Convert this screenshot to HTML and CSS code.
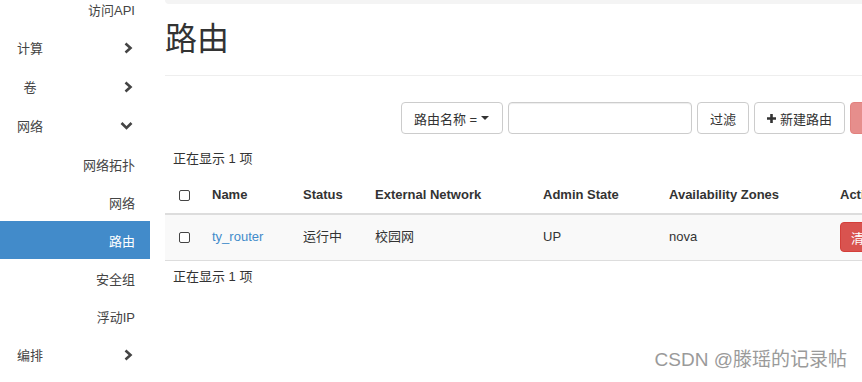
FILE: index.html
```html
<!DOCTYPE html>
<html>

<head>
    <meta charset="utf-8">
    <link rel="stylesheet" href="styles.css">
</head>

<body>

    <div class="page">

        <aside class="sidebar">
            <ul class="nav">
                <li class="sub">访问API</li>
                <li class="top"><span class="label">计算</span>
                    <svg class="chev" width="10" height="12" viewBox="0 0 10 12"><polyline points="2.5,1.5 7.5,6 2.5,10.5" /></svg>
                </li>
                <li class="top"><span class="label">卷</span>
                    <svg class="chev" width="10" height="12" viewBox="0 0 10 12"><polyline points="2.5,1.5 7.5,6 2.5,10.5" /></svg>
                </li>
                <li class="top"><span class="label">网络</span>
                    <svg class="chev down" width="13" height="10" viewBox="0 0 13 10"><polyline points="1.5,2 6.5,7 11.5,2" /></svg>
                </li>
                <li class="sub">网络拓扑</li>
                <li class="sub">网络</li>
                <li class="sub active">路由</li>
                <li class="sub">安全组</li>
                <li class="sub">浮动IP</li>
                <li class="top"><span class="label">编排</span>
                    <svg class="chev" width="10" height="12" viewBox="0 0 10 12"><polyline points="2.5,1.5 7.5,6 2.5,10.5" /></svg>
                </li>
            </ul>
        </aside>

        <main class="content">
            <div class="topbar"></div>

            <div class="page-header">
                <h1>路由</h1>
            </div>

            <div class="table-actions">
                <button class="btn filter-field">路由名称 = <span class="caret"></span></button>
                <input class="search" type="text">
                <button class="btn">过滤</button>
                <button class="btn"><svg class="plus" width="9" height="9" viewBox="0 0 9 9"><path d="M3.2 0h2.6v3.2H9v2.6H5.8V9H3.2V5.8H0V3.2h3.2z" /></svg>新建路由</button>
                <button class="btn btn-danger disabled">删除路由</button>
            </div>

            <div class="count">正在显示 1 项</div>

            <table class="table">
                <colgroup>
                    <col style="width: 39px">
                    <col style="width: 91px">
                    <col style="width: 72px">
                    <col style="width: 168px">
                    <col style="width: 126px">
                    <col style="width: 171px">
                    <col style="width: 113px">
                </colgroup>
                <thead>
                    <tr>
                        <th class="check"><span class="cb"></span></th>
                        <th>Name</th>
                        <th>Status</th>
                        <th>External Network</th>
                        <th>Admin State</th>
                        <th>Availability Zones</th>
                        <th>Actions</th>
                    </tr>
                </thead>
                <tbody>
                    <tr>
                        <td class="check"><span class="cb"></span></td>
                        <td><a href="#">ty_router</a></td>
                        <td>运行中</td>
                        <td>校园网</td>
                        <td>UP</td>
                        <td>nova</td>
                        <td><button class="btn btn-danger small">清除网关</button></td>
                    </tr>
                </tbody>
            </table>

            <div class="count after">正在显示 1 项</div>
        </main>

    </div>

    <div class="watermark">CSDN @滕瑶的记录帖</div>

</body>

</html>
```

FILE: styles.css
```css
body {
    margin: 0;
    padding: 0;
    overflow: hidden;
    font-family: "Liberation Sans", "Noto Sans CJK SC", sans-serif;
    font-size: 13px;
    color: #333;
    background-color: white;
}

.page {
    display: flex;
    align-items: flex-start;
    width: 862px;
    height: 382px;
    overflow: hidden;
}

/* sidebar */

.sidebar {
    flex: 0 0 150px;
    width: 150px;
}

.nav {
    list-style-type: none;
    margin: -10px 0 0 0;
    padding: 0;
}

.nav li {
    display: flex;
    align-items: center;
    color: #444;
}

.nav li.top {
    height: 39px;
    padding-left: 16px;
    padding-right: 17px;
    justify-content: space-between;
}

.nav li.top .label {
    width: 28px;
    text-align: center;
}

.nav li.sub {
    height: 38px;
    justify-content: flex-end;
    padding-right: 15px;
}

.nav li.active {
    background-color: #428bca;
    color: white;
}

.chev polyline {
    fill: none;
    stroke: #444;
    stroke-width: 2.6;
}

/* main */

.content {
    flex: 0 0 780px;
    margin-left: 15px;
}

.topbar {
    height: 4px;
    background-color: #f4f4f4;
    border-bottom-left-radius: 4px;
}

.page-header {
    padding-bottom: 18px;
    border-bottom: 1px solid #eee;
}

.page-header h1 {
    margin: 18px 0 0 0;
    font-size: 32px;
    font-weight: normal;
    line-height: 35px;
}

.table-actions {
    display: flex;
    justify-content: flex-end;
    gap: 5px;
    margin-top: 26px;
}

.btn {
    height: 32px;
    padding: 0 12px;
    border: 1px solid #ccc;
    border-radius: 4px;
    background-color: white;
    color: #333;
    font-family: inherit;
    font-size: 13px;
    display: flex;
    align-items: center;
    box-sizing: border-box;
}

.filter-field {
    width: 102px;
}

.caret {
    display: inline-block;
    margin-left: 4px;
    width: 0;
    height: 0;
    border-left: 4px solid transparent;
    border-right: 4px solid transparent;
    border-top: 4px solid #333;
}

.search {
    width: 184px;
    height: 32px;
    box-sizing: border-box;
    border: 1px solid #ccc;
    border-radius: 4px;
    box-shadow: inset 0 1px 1px rgba(0, 0, 0, 0.075);
    margin: 0;
}

.plus {
    margin-right: 4px;
    fill: #333;
}

.btn-danger {
    background-color: #d9534f;
    border-color: #d43f3a;
    color: white;
    width: 95px;
}

.btn-danger.disabled {
    opacity: 0.65;
}

.btn-danger.small {
    height: 30px;
    width: 100px;
    padding: 0 10px;
}

.count {
    margin-top: 15px;
    padding-left: 8px;
    line-height: 20px;
}

.count.after {
    margin-top: 6px;
}

/* table */

.table {
    margin-top: 8px;
    width: 780px;
    table-layout: fixed;
    border-collapse: collapse;
}

.table th,
.table td {
    padding: 8px;
    text-align: left;
    line-height: 20px;
    white-space: nowrap;
    overflow: hidden;
}

.table th {
    font-weight: bold;
    border-bottom: 2px solid #ddd;
}

.table td {
    padding-top: 7px;
    padding-bottom: 8px;
    background-color: #f9f9f9;
    border-bottom: 1px solid #ddd;
}

.table .check {
    text-align: center;
    padding-left: 0;
    padding-right: 0;
}

.cb {
    display: inline-block;
    width: 11px;
    height: 11px;
    box-sizing: border-box;
    border: 1px solid #444;
    border-radius: 2px;
    vertical-align: middle;
    background-color: white;
}

.table a {
    color: #428bca;
    text-decoration: none;
}

.watermark {
    position: absolute;
    right: 15px;
    top: 344px;
    font-size: 19px;
    color: #9a9a9a;
    text-shadow: 0 0 2px white, 0 0 1px white;
}
```
